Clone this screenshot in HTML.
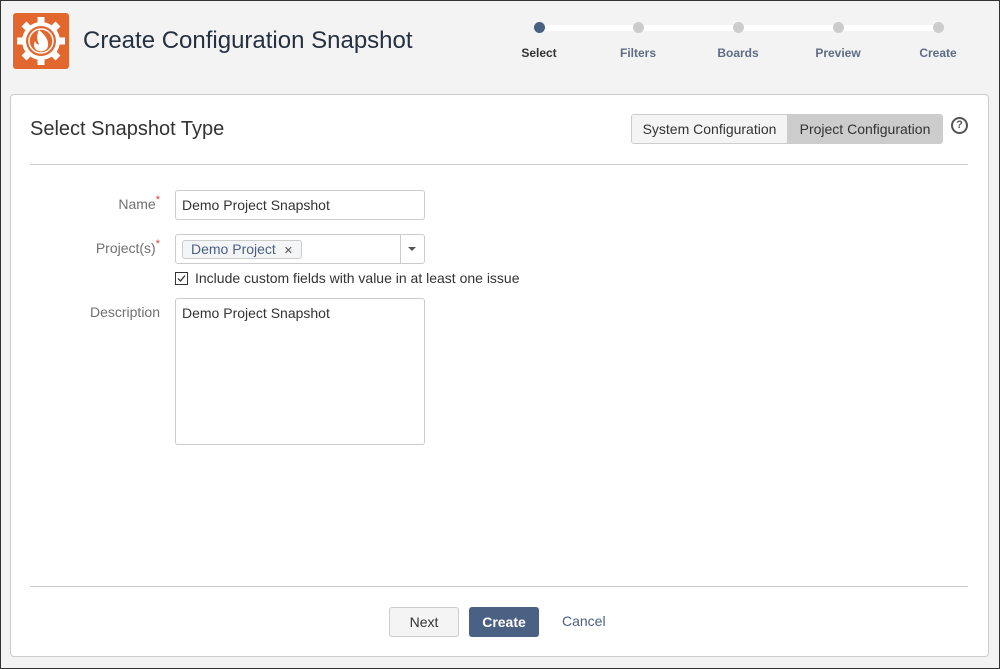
<!DOCTYPE html>
<html><head><style>
*{box-sizing:border-box;margin:0;padding:0}
body{width:1000px;height:669px;background:#f3f3f3;font-family:"Liberation Sans",Arial,sans-serif;position:relative;overflow:hidden;}
.frame{position:absolute;left:0;top:0;width:1000px;height:669px;border:1px solid #333;pointer-events:none}
.abs{position:absolute}
.logo{left:13px;top:13px;width:56px;height:56px;background:#e2672f;border-radius:3px}
h1{position:absolute;left:83px;top:27px;font-size:24px;font-weight:normal;color:#253040}
.track{left:539px;top:25px;width:400px;height:6px;background:#fff}
.dot{width:11px;height:11px;border-radius:50%;background:#ccc;top:22px;border:0}
.lbl{top:46px;font-size:12px;font-weight:bold;color:#5e6c84;width:80px;text-align:center}
.panel{left:10px;top:94px;width:979px;height:563px;background:#fff;border:1px solid #ccc;border-radius:4px}
.hr{height:1px;background:#ccc;left:30px;width:938px}
.field{border:1px solid #ccc;border-radius:3px;background:#fff;font-size:14px;color:#333}
.label{font-size:14px;color:#707070;text-align:right;width:80px}
.star{color:#d04437;font-size:11px;position:relative;top:-6px}
</style></head><body>
<div class="abs logo">
<svg width="56" height="56" viewBox="0 0 56 56">
<g fill="#fff" transform="translate(28,28)">
<circle r="19"/>
<g><rect x="-3.5" y="-24" width="7" height="9"/><rect x="-3.5" y="15" width="7" height="9"/><rect x="-24" y="-3.5" width="9" height="7"/><rect x="15" y="-3.5" width="9" height="7"/>
<rect x="-3.5" y="-24" width="7" height="9" transform="rotate(45)"/><rect x="-3.5" y="15" width="7" height="9" transform="rotate(45)"/><rect x="-24" y="-3.5" width="9" height="7" transform="rotate(45)"/><rect x="15" y="-3.5" width="9" height="7" transform="rotate(45)"/></g>
<circle r="15" fill="#e2672f"/>
<circle r="12" fill="none" stroke="#fff" stroke-width="1.5"/>
<path d="M-2,-11 C4,-6 8,-1 7,5 C6,10 1,11 -2,10 C-7,9 -8,4 -6,0 C-5,3 -3,4 -2,3 C-5,-2 -4,-7 -2,-11Z"/>
</g></svg></div>
<h1>Create Configuration Snapshot</h1>
<div class="abs track"></div>
<div class="abs dot" style="left:534px;background:#4b5f80"></div>
<div class="abs dot" style="left:633px"></div>
<div class="abs dot" style="left:733px"></div>
<div class="abs dot" style="left:833px"></div>
<div class="abs dot" style="left:933px"></div>
<div class="abs lbl" style="left:499px;color:#333">Select</div>
<div class="abs lbl" style="left:598px">Filters</div>
<div class="abs lbl" style="left:698px">Boards</div>
<div class="abs lbl" style="left:798px">Preview</div>
<div class="abs lbl" style="left:898px">Create</div>
<div class="abs panel"></div>
<div class="abs" style="left:30px;top:118px;font-size:20px;color:#333">Select Snapshot Type</div>
<div class="abs" style="left:631px;top:114px;width:312px;height:30px;border:1px solid #ccc;border-radius:3px;display:flex;font-size:14px;color:#333;overflow:hidden">
<div style="width:156px;background:#f4f4f4;line-height:28px;text-align:center;border-right:1px solid #ccc">System Configuration</div>
<div style="flex:1;background:#ccc;line-height:28px;text-align:center">Project Configuration</div></div>
<div class="abs" style="left:951px;top:117px;width:17px;height:17px;border:2px solid #555;border-radius:50%;font-size:11px;font-weight:bold;color:#555;text-align:center;line-height:13px">?</div>
<div class="abs hr" style="top:164px"></div>
<div class="abs label" style="left:80px;top:196px">Name<span class="star">*</span></div>
<div class="abs field" style="left:175px;top:190px;width:250px;height:30px;padding:6px 6px">Demo Project Snapshot</div>
<div class="abs label" style="left:80px;top:240px">Project(s)<span class="star">*</span></div>
<div class="abs field" style="left:175px;top:234px;width:250px;height:30px"></div>
<div class="abs" style="left:400px;top:235px;width:1px;height:28px;background:#ccc"></div>
<div class="abs" style="left:408px;top:247px;width:0;height:0;border-left:4px solid transparent;border-right:4px solid transparent;border-top:4px solid #555"></div>
<div class="abs" style="left:182px;top:240px;height:19px;padding:0 8px;border:1px solid #ccc;border-radius:3px;background:#f4f5f7;font-size:14px;color:#4b5f80;line-height:17px">Demo Project <span style="font-size:11px;color:#555;margin-left:4px">✕</span></div>
<div class="abs" style="left:175px;top:272px;width:13px;height:13px;border:1px solid #333;"><svg width="11" height="11" style="display:block"><path d="M2 5.5 L4.5 8 L9 2.5" fill="none" stroke="#333" stroke-width="1.3"/></svg></div>
<div class="abs" style="left:195px;top:270px;font-size:14px;color:#333">Include custom fields with value in at least one issue</div>
<div class="abs label" style="left:80px;top:304px">Description</div>
<div class="abs field" style="left:175px;top:298px;width:250px;height:147px;padding:6px 6px">Demo Project Snapshot</div>
<div class="abs hr" style="top:586px"></div>
<div class="abs" style="left:389px;top:607px;width:70px;height:30px;border:1px solid #ccc;border-radius:3px;background:#f4f4f4;font-size:14px;color:#333;text-align:center;line-height:28px">Next</div>
<div class="abs" style="left:469px;top:607px;width:70px;height:30px;border-radius:3px;background:#4b6183;font-size:14px;font-weight:bold;color:#fff;text-align:center;line-height:30px">Create</div>
<div class="abs" style="left:562px;top:613px;font-size:14px;color:#4b6183">Cancel</div>
<div class="frame"></div>
</body></html>
